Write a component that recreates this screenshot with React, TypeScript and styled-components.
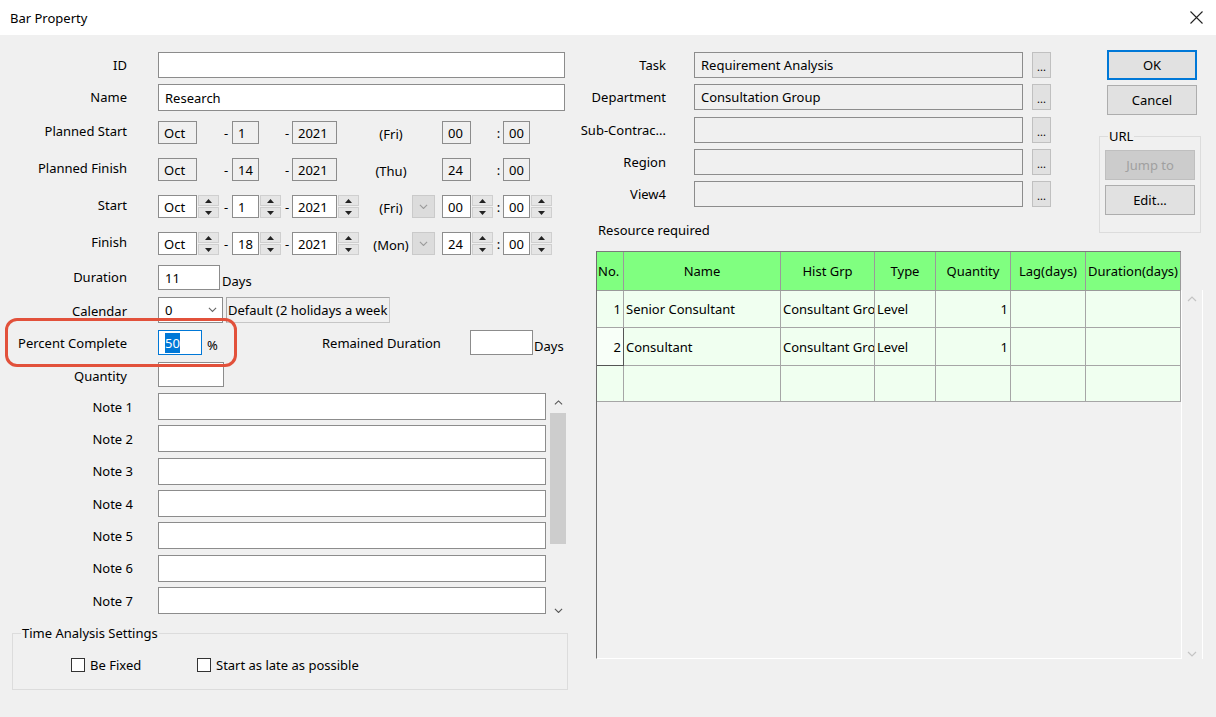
import React from 'react';
import styled, { createGlobalStyle } from 'styled-components';

const GlobalStyle = createGlobalStyle`
  html, body { margin: 0; padding: 0; background: #f0f0f0; }
  body { font-family: "Noto Sans", "Open Sans", sans-serif; font-size: 13px; color: #000; }
  * { box-sizing: border-box; }
`;

const Window = styled.div`
  width: 1216px;
  height: 717px;
  background: #f0f0f0;
  display: flex;
  flex-direction: column;
  overflow: hidden;
`;

const TitleBar = styled.div`
  height: 35px;
  flex-shrink: 0;
  background: #fff;
  display: flex;
  align-items: center;
  justify-content: space-between;
  padding: 0 13px 0 10px;
`;

const Title = styled.span`
  font-size: 13px;
`;

const Body = styled.div`
  flex: 1;
  display: flex;
`;

/* ---------- left pane ---------- */
const LeftPane = styled.div`
  position: relative;
  width: 575px;
  padding-top: 17px;
  display: flex;
  flex-direction: column;
`;

const FieldRow = styled.div<{ $h: number; $mt?: number }>`
  display: grid;
  grid-template-columns: 127px auto;
  column-gap: 31px;
  align-items: center;
  height: ${(p) => p.$h}px;
  margin-top: ${(p) => p.$mt ?? 0}px;
`;

const Label = styled.div<{ $shift?: number; $dy?: number }>`
  text-align: right;
  white-space: nowrap;
  margin-right: ${(p) => -(p.$shift ?? 0)}px;
  position: relative;
  top: ${(p) => p.$dy ?? -1}px;
`;

const Content = styled.div`
  display: flex;
  align-items: center;
  height: 100%;
`;

const TextBox = styled.div<{ $w: number; $ro?: boolean; $focus?: boolean }>`
  width: ${(p) => p.$w}px;
  height: 100%;
  flex-shrink: 0;
  border: 1px solid ${(p) => (p.$focus ? '#0078d7' : '#8c8c8c')};
  background: ${(p) => (p.$ro ? '#f0f0f0' : '#fff')};
  display: flex;
  align-items: center;
  padding: 0 6px;
  white-space: nowrap;
  overflow: hidden;
`;

const Selected = styled.span`
  background: #0078d7;
  color: #fff;
  padding: 1px 0;
`;

const Unit = styled.span<{ $w?: number; $ml?: number; $dy?: number }>`
  margin-left: ${(p) => p.$ml ?? 2}px;
  width: ${(p) => (p.$w ? `${p.$w}px` : 'auto')};
  flex-shrink: 0;
  white-space: nowrap;
  position: relative;
  top: ${(p) => p.$dy ?? 0}px;
`;

const DateGrid = styled.div`
  display: grid;
  grid-template-columns: 39px 23px 12px 27px 23px 10px 45px 23px 52px 23px 7px 29px 23px 9px 27px 23px;
  height: 100%;
`;

const DateBox = styled.div<{ $ro?: boolean }>`
  border: 1px solid #8c8c8c;
  background: ${(p) => (p.$ro ? '#f0f0f0' : '#fff')};
  display: flex;
  align-items: center;
  padding: 0 5px;
`;

const Sep = styled.div`
  display: flex;
  align-items: center;
  justify-content: center;
`;

const Weekday = styled.div`
  display: flex;
  align-items: center;
  justify-content: center;
  padding-left: 10px;
  white-space: nowrap;
  position: relative;
  top: 1px;
`;

const SpinWrap = styled.div`
  display: flex;
  flex-direction: column;
  margin: 0 1px;
  gap: 1px;
`;

const SpinBtn = styled.div`
  flex: 1;
  background: #e5e5e5;
  border: 1px solid #cfcfcf;
  display: flex;
  align-items: center;
  justify-content: center;
`;

const DropBtn = styled.div`
  background: #dcdcdc;
  border: 1px solid #cacaca;
  display: flex;
  align-items: center;
  justify-content: center;
`;

const Combo = styled.div<{ $w: number }>`
  width: ${(p) => p.$w}px;
  height: 100%;
  border: 1px solid #8c8c8c;
  background: #fff;
  display: flex;
  align-items: center;
  justify-content: space-between;
  padding: 0 5px 0 6px;
  flex-shrink: 0;
`;

const InfoBox = styled.div<{ $w: number }>`
  width: ${(p) => p.$w}px;
  height: 100%;
  margin-left: 3px;
  border: 1px solid #c6c6c6;
  border-top-color: #a8a8a8;
  border-left-color: #a8a8a8;
  background: #f0f0f0;
  display: flex;
  align-items: center;
  padding-left: 1px;
  white-space: nowrap;
  overflow: hidden;
`;

const Highlight = styled.div`
  position: absolute;
  left: 5px;
  top: 283px;
  width: 232px;
  height: 49px;
  border: 3px solid #e2513b;
  border-radius: 12px;
  pointer-events: none;
`;

const NotesArea = styled.div`
  display: flex;
  margin-top: 6px;
`;

const NotesList = styled.div`
  width: 546px;
  display: flex;
  flex-direction: column;
  gap: 5.35px;
`;

const NoteScroll = styled.div`
  width: 20px;
  margin-left: 2px;
  display: flex;
  flex-direction: column;
  align-items: stretch;
`;

const ScrollArrow = styled.div<{ $h: number; $bottom?: boolean }>`
  height: ${(p) => p.$h}px;
  display: flex;
  align-items: ${(p) => (p.$bottom ? 'flex-end' : 'center')};
  padding-bottom: ${(p) => (p.$bottom ? 4 : 0)}px;
  justify-content: center;
`;

const ScrollThumb = styled.div<{ $h: number }>`
  height: ${(p) => p.$h}px;
  margin: 0 2px;
  background: #cdcdcd;
`;

const Group = styled.fieldset<{ $w: number; $h: number }>`
  margin: 0;
  padding: 0;
  width: ${(p) => p.$w}px;
  height: ${(p) => p.$h}px;
  border: 1px solid #dcdcdc;
  min-width: 0;
`;

const Legend = styled.legend`
  padding: 0 1px;
  margin-left: 8px;
  line-height: 17px;
`;

const TimeGroup = styled(Group)`
  margin: 8px 0 0 12px;
  display: flex;
  align-items: flex-start;
  padding-top: 14px;
`;

const CheckRow = styled.label<{ $ml: number; $w?: number }>`
  display: flex;
  align-items: center;
  gap: 5px;
  margin-left: ${(p) => p.$ml}px;
  width: ${(p) => (p.$w ? `${p.$w}px` : 'auto')};
`;

const CheckBox = styled.span`
  width: 14px;
  height: 14px;
  border: 1px solid #333;
  background: #fff;
  flex-shrink: 0;
`;

/* ---------- right pane ---------- */
const RightPane = styled.div`
  flex: 1;
  display: flex;
  flex-direction: column;
  padding-right: 13px;
`;

const RightTop = styled.div`
  display: flex;
  justify-content: space-between;
  align-items: flex-start;
`;

const FieldsCol = styled.div`
  width: 476px;
  padding-top: 17px;
  display: flex;
  flex-direction: column;
  gap: 6.3px;
`;

const RField = styled.div`
  display: flex;
  align-items: center;
  height: 26px;
`;

const RLabel = styled.div`
  width: 91px;
  margin-right: 28px;
  text-align: right;
  white-space: nowrap;
`;

const DotsBtn = styled.div`
  width: 19px;
  height: 100%;
  margin-left: 9px;
  background: #e1e1e1;
  border: 1px solid #c0c0c0;
  display: flex;
  align-items: flex-end;
  justify-content: center;
  font-size: 11px;
  line-height: 1;
  padding-bottom: 5px;
`;

const SectionTitle = styled.div`
  margin-top: 8px;
  padding-left: 23px;
  line-height: 18px;
`;

const ButtonsCol = styled.div`
  width: 102px;
  margin-top: 15px;
  margin-right: 2px;
  display: flex;
  flex-direction: column;
`;

const Button = styled.div<{ $h: number; $primary?: boolean; $disabled?: boolean; $ml: number; $mt?: number }>`
  width: 90px;
  height: ${(p) => p.$h}px;
  margin-left: ${(p) => p.$ml}px;
  margin-top: ${(p) => p.$mt ?? 0}px;
  background: ${(p) => (p.$disabled ? '#cccccc' : '#e1e1e1')};
  color: ${(p) => (p.$disabled ? '#a0a0a0' : '#000')};
  border: ${(p) => (p.$primary ? '2px solid #0078d7' : `1px solid ${p.$disabled ? '#bfbfbf' : '#adadad'}`)};
  display: flex;
  align-items: center;
  justify-content: center;
`;

const UrlGroup = styled(Group)`
  margin-top: 13px;
  display: flex;
  flex-direction: column;
  padding-top: 5px;
`;

const TableBox = styled.div`
  margin-top: 12px;
  margin-left: 21px;
  width: 607px;
  height: 408px;
  display: flex;
`;

const GridArea = styled.div`
  width: 585px;
  display: flex;
  flex-direction: column;
  border-left: 1px solid #6e6e6e;
  border-bottom: 1px solid #ffffff;
`;

const Grid = styled.div`
  display: grid;
  grid-template-columns: 27px 157px 94px 61px 75px 75px 95px;
  grid-template-rows: 39px 37px 38px 36px;
  border-top: 1px solid #7a7a7a;
`;

const HeadCell = styled.div<{ $first?: boolean }>`
  background: #80ff80;
  border-right: 1px solid #9a9a9a;
  border-bottom: 1px solid #9a9a9a;
  display: flex;
  align-items: center;
  justify-content: ${(p) => (p.$first ? 'flex-start' : 'center')};
  padding-left: ${(p) => (p.$first ? 1 : 0)}px;
  white-space: nowrap;
  overflow: hidden;
`;

const Cell = styled.div<{ $align?: 'left' | 'right'; $raised?: boolean }>`
  background: ${(p) => (p.$raised ? '#f8fff8' : '#f0fff0')};
  border-right: 1px solid ${(p) => (p.$raised ? '#555' : '#a6a6a6')};
  border-bottom: 1px solid ${(p) => (p.$raised ? '#555' : '#a6a6a6')};
  display: flex;
  align-items: center;
  justify-content: ${(p) => (p.$align === 'right' ? 'flex-end' : 'flex-start')};
  padding: 0 2px;
  white-space: nowrap;
  overflow: hidden;
`;

const EmptyArea = styled.div`
  flex: 1;
  background: #f1f1f1;
`;

const TableScroll = styled.div`
  width: 22px;
  margin-top: 39px;
  background: #f0f0f0;
  border-left: 1px solid #fff;
  border-right: 1px solid #fff;
  display: flex;
  flex-direction: column;
  justify-content: space-between;
  align-items: center;
  padding: 6px 0 2px;
`;

/* ---------- icons ---------- */
const Tri = ({ up }: { up?: boolean }) => (
  <svg width="7" height="4" viewBox="0 0 7 4">
    <path d={up ? 'M0 4 L3.5 0 L7 4 Z' : 'M0 0 L3.5 4 L7 0 Z'} fill="#222" />
  </svg>
);

const Chevron = ({ up, color = '#555', size = 9 }: { up?: boolean; color?: string; size?: number }) => (
  <svg width={size} height={size * 0.6} viewBox="0 0 10 6">
    <path d={up ? 'M1 5 L5 1 L9 5' : 'M1 1 L5 5 L9 1'} fill="none" stroke={color} strokeWidth="1.2" />
  </svg>
);

const CloseIcon = () => (
  <svg width="13" height="13" viewBox="0 0 13 13">
    <path d="M0.5 0.5 L12.5 12.5 M12.5 0.5 L0.5 12.5" stroke="#222" strokeWidth="1.1" />
  </svg>
);

const Spinner = () => (
  <SpinWrap>
    <SpinBtn>
      <Tri up />
    </SpinBtn>
    <SpinBtn>
      <Tri />
    </SpinBtn>
  </SpinWrap>
);

type DateRowProps = { m: string; d: string; y: string; wd: string; h: string; mi: string; editable?: boolean };

const DateRow = ({ m, d, y, wd, h, mi, editable }: DateRowProps) => (
  <DateGrid>
    <DateBox $ro={!editable}>{m}</DateBox>
    {editable ? <Spinner /> : <span />}
    <Sep>-</Sep>
    <DateBox $ro={!editable}>{d}</DateBox>
    {editable ? <Spinner /> : <span />}
    <Sep>-</Sep>
    <DateBox $ro={!editable}>{y}</DateBox>
    {editable ? <Spinner /> : <span />}
    <Weekday>{wd}</Weekday>
    {editable ? (
      <DropBtn>
        <Chevron color="#9a9a9a" size={9} />
      </DropBtn>
    ) : (
      <span />
    )}
    <span />
    <DateBox $ro={!editable}>{h}</DateBox>
    {editable ? <Spinner /> : <span />}
    <Sep>:</Sep>
    <DateBox $ro={!editable}>{mi}</DateBox>
    {editable ? <Spinner /> : <span />}
  </DateGrid>
);

const rightFields = [
  { label: 'Task', value: 'Requirement Analysis' },
  { label: 'Department', value: 'Consultation Group' },
  { label: 'Sub-Contrac...', value: '' },
  { label: 'Region', value: '' },
  { label: 'View4', value: '' },
];

const columns = ['No.', 'Name', 'Hist Grp', 'Type', 'Quantity', 'Lag(days)', 'Duration(days)'];
const rows = [
  ['1', 'Senior Consultant', 'Consultant Gro', 'Level', '1', '', ''],
  ['2', 'Consultant', 'Consultant Gro', 'Level', '1', '', ''],
  ['', '', '', '', '', '', ''],
];

export default function App() {
  return (
    <>
      <GlobalStyle />
      <Window>
        <TitleBar>
          <Title>Bar Property</Title>
          <CloseIcon />
        </TitleBar>
        <Body>
          <LeftPane>
            <FieldRow $h={26}>
              <Label $dy={0}>ID</Label>
              <Content>
                <TextBox $w={407} />
              </Content>
            </FieldRow>
            <FieldRow $h={27} $mt={6}>
              <Label>Name</Label>
              <Content>
                <TextBox $w={407}>Research</TextBox>
              </Content>
            </FieldRow>
            <FieldRow $h={23} $mt={10}>
              <Label $dy={-2}>Planned Start</Label>
              <DateRow m="Oct" d="1" y="2021" wd="(Fri)" h="00" mi="00" />
            </FieldRow>
            <FieldRow $h={23} $mt={14}>
              <Label $dy={-2}>Planned Finish</Label>
              <DateRow m="Oct" d="14" y="2021" wd="(Thu)" h="24" mi="00" />
            </FieldRow>
            <FieldRow $h={23} $mt={14}>
              <Label $dy={-2}>Start</Label>
              <DateRow m="Oct" d="1" y="2021" wd="(Fri)" h="00" mi="00" editable />
            </FieldRow>
            <FieldRow $h={23} $mt={14}>
              <Label $dy={-2}>Finish</Label>
              <DateRow m="Oct" d="18" y="2021" wd="(Mon)" h="24" mi="00" editable />
            </FieldRow>
            <FieldRow $h={25} $mt={10}>
              <Label>Duration</Label>
              <Content>
                <TextBox $w={62}>11</TextBox>
                <Unit $dy={3}>Days</Unit>
              </Content>
            </FieldRow>
            <FieldRow $h={26} $mt={7}>
              <Label $dy={1}>Calendar</Label>
              <Content>
                <Combo $w={65}>
                  <span>0</span>
                  <Chevron color="#666" size={9} />
                </Combo>
                <InfoBox $w={164}>Default (2 holidays a week</InfoBox>
              </Content>
            </FieldRow>
            <FieldRow $h={25} $mt={7}>
              <Label $dy={0}>Percent Complete</Label>
              <Content>
                <TextBox $w={44} $focus>
                  <Selected>50</Selected>
                </TextBox>
                <Unit $ml={5} $w={115} $dy={2}>
                  %
                </Unit>
                <Unit $ml={0} $w={148}>
                  Remained Duration
                </Unit>
                <TextBox $w={63} />
                <Unit $ml={1} $dy={3}>
                  Days
                </Unit>
              </Content>
            </FieldRow>
            <FieldRow $h={25} $mt={7}>
              <Label $dy={1}>Quantity</Label>
              <Content>
                <TextBox $w={66} />
              </Content>
            </FieldRow>
            <NotesArea>
              <NotesList>
                {[1, 2, 3, 4, 5, 6, 7].map((n) => (
                  <FieldRow key={n} $h={27}>
                    <Label $shift={6} $dy={0}>
                      Note {n}
                    </Label>
                    <Content>
                      <TextBox $w={388} />
                    </Content>
                  </FieldRow>
                ))}
              </NotesList>
              <NoteScroll>
                <ScrollArrow $h={20}>
                  <Chevron up color="#555" size={9} />
                </ScrollArrow>
                <ScrollThumb $h={131} />
                <ScrollArrow $h={73} $bottom>
                  <Chevron color="#555" size={9} />
                </ScrollArrow>
              </NoteScroll>
            </NotesArea>
            <TimeGroup $w={556} $h={65}>
              <Legend>Time Analysis Settings</Legend>
              <CheckRow $ml={58} $w={126}>
                <CheckBox />
                Be Fixed
              </CheckRow>
              <CheckRow $ml={0}>
                <CheckBox />
                Start as late as possible
              </CheckRow>
            </TimeGroup>
            <Highlight />
          </LeftPane>

          <RightPane>
            <RightTop>
              <FieldsCol>
                {rightFields.map((f) => (
                  <RField key={f.label}>
                    <RLabel>{f.label}</RLabel>
                    <TextBox $w={329} $ro>
                      {f.value}
                    </TextBox>
                    <DotsBtn>...</DotsBtn>
                  </RField>
                ))}
                <SectionTitle>Resource required</SectionTitle>
              </FieldsCol>
              <ButtonsCol>
                <Button $h={30} $ml={8} $primary>
                  OK
                </Button>
                <Button $h={30} $ml={8} $mt={5}>
                  Cancel
                </Button>
                <UrlGroup $w={102} $h={105}>
                  <Legend>URL</Legend>
                  <Button $h={30} $ml={5} $disabled>
                    Jump to
                  </Button>
                  <Button $h={30} $ml={5} $mt={5}>
                    Edit...
                  </Button>
                </UrlGroup>
              </ButtonsCol>
            </RightTop>

            <TableBox>
              <GridArea>
                <Grid>
                  {columns.map((c, i) => (
                    <HeadCell key={c} $first={i === 0}>
                      {c}
                    </HeadCell>
                  ))}
                  {rows.map((r, ri) =>
                    r.map((v, ci) => (
                      <Cell
                        key={`${ri}-${ci}`}
                        $align={ci === 0 || ci === 4 ? 'right' : 'left'}
                        $raised={ri === 1 && ci === 0}
                      >
                        {v}
                      </Cell>
                    ))
                  )}
                </Grid>
                <EmptyArea />
              </GridArea>
              <TableScroll>
                <Chevron up color="#c4c4c4" size={10} />
                <Chevron color="#c4c4c4" size={10} />
              </TableScroll>
            </TableBox>
          </RightPane>
        </Body>
      </Window>
    </>
  );
}
